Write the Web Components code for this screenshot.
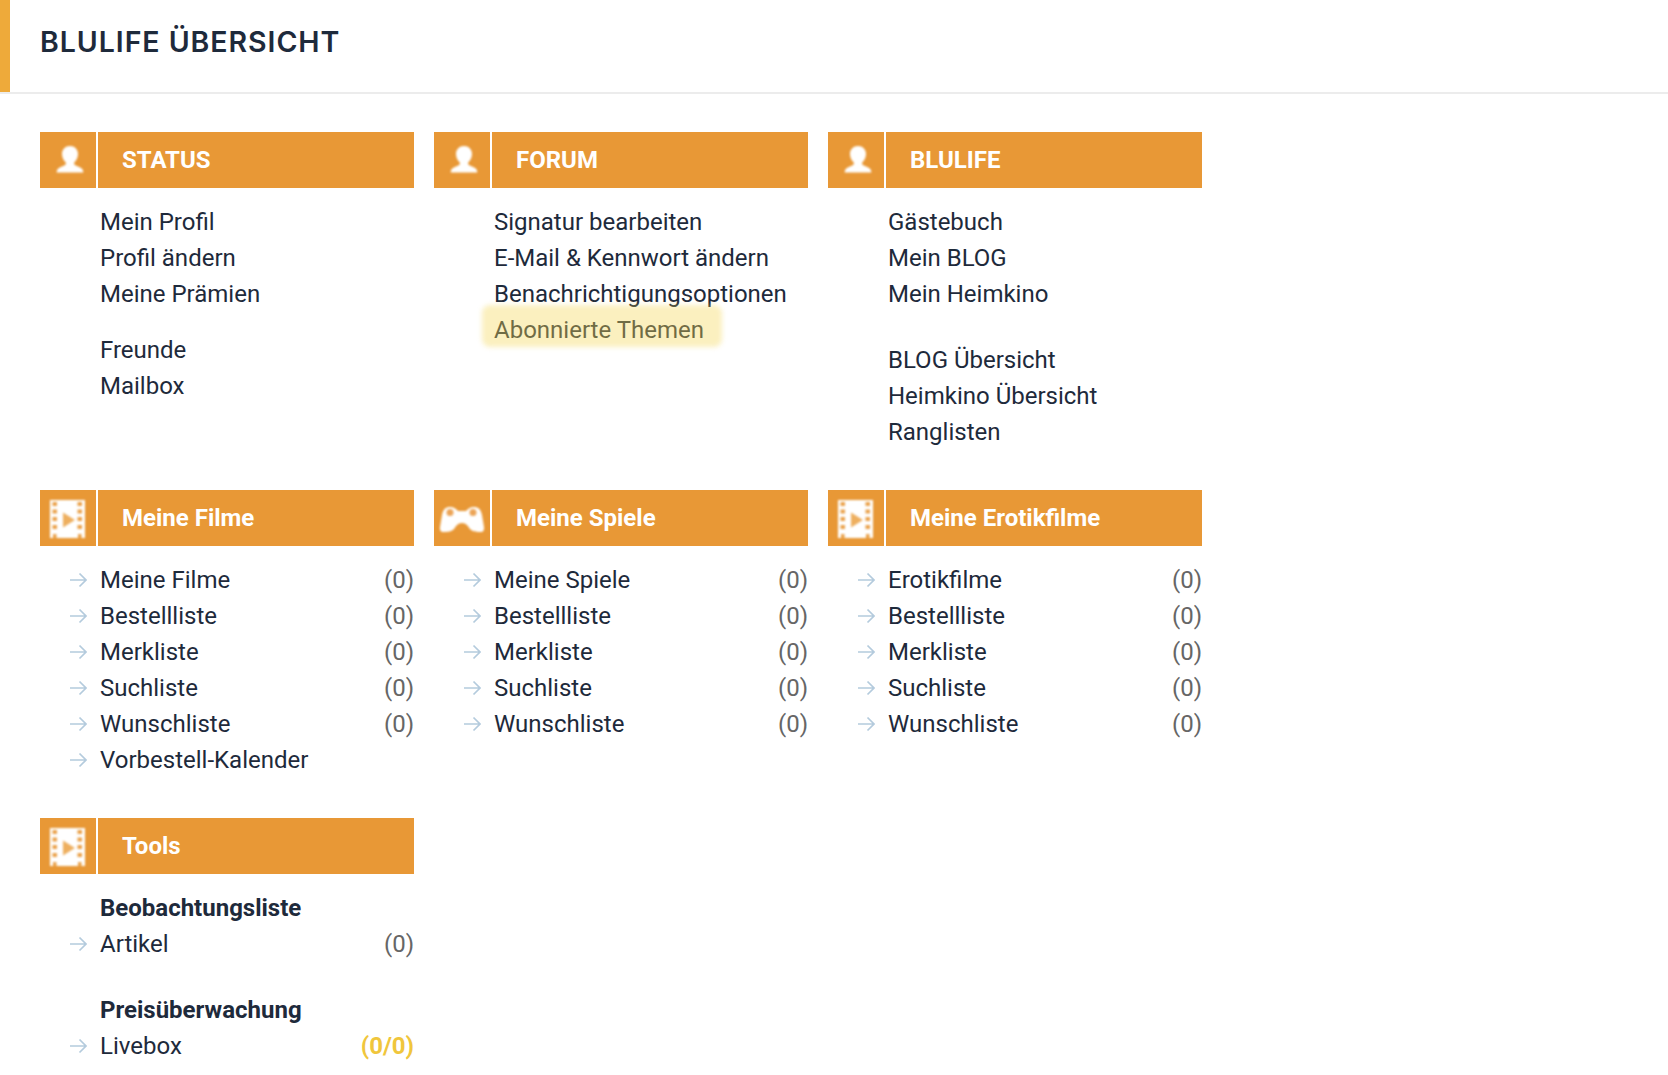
<!DOCTYPE html>
<html lang="de">
<head>
<meta charset="UTF-8">
<title>Blulife Übersicht</title>
<style>
	body {
		margin: 0;
		background: #fff;
		color: #1e2a3b;
		font-family: Roboto, "Liberation Sans", sans-serif;
	}
</style>
</head>
<body>
	<page-header>BLULIFE ÜBERSICHT</page-header>
	<section-grid>
		<section-box icon="person" heading="STATUS">
			<link-row>Mein Profil</link-row>
			<link-row>Profil ändern</link-row>
			<link-row>Meine Prämien</link-row>
			<link-row gap="20">Freunde</link-row>
			<link-row>Mailbox</link-row>
		</section-box>
		<section-box icon="person" heading="FORUM">
			<link-row>Signatur bearbeiten</link-row>
			<link-row>E-Mail &amp; Kennwort ändern</link-row>
			<link-row>Benachrichtigungsoptionen</link-row>
			<link-row marked>Abonnierte Themen</link-row>
		</section-box>
		<section-box icon="person" heading="BLULIFE">
			<link-row>Gästebuch</link-row>
			<link-row>Mein BLOG</link-row>
			<link-row>Mein Heimkino</link-row>
			<link-row gap="30">BLOG Übersicht</link-row>
			<link-row>Heimkino Übersicht</link-row>
			<link-row>Ranglisten</link-row>
		</section-box>

		<section-box icon="film" heading="Meine Filme">
			<link-row arrow count="(0)">Meine Filme</link-row>
			<link-row arrow count="(0)">Bestellliste</link-row>
			<link-row arrow count="(0)">Merkliste</link-row>
			<link-row arrow count="(0)">Suchliste</link-row>
			<link-row arrow count="(0)">Wunschliste</link-row>
			<link-row arrow>Vorbestell-Kalender</link-row>
		</section-box>
		<section-box icon="pad" heading="Meine Spiele">
			<link-row arrow count="(0)">Meine Spiele</link-row>
			<link-row arrow count="(0)">Bestellliste</link-row>
			<link-row arrow count="(0)">Merkliste</link-row>
			<link-row arrow count="(0)">Suchliste</link-row>
			<link-row arrow count="(0)">Wunschliste</link-row>
		</section-box>
		<section-box icon="film" heading="Meine Erotikfilme">
			<link-row arrow count="(0)">Erotikfilme</link-row>
			<link-row arrow count="(0)">Bestellliste</link-row>
			<link-row arrow count="(0)">Merkliste</link-row>
			<link-row arrow count="(0)">Suchliste</link-row>
			<link-row arrow count="(0)">Wunschliste</link-row>
		</section-box>

		<section-box icon="film" heading="Tools">
			<link-row strong>Beobachtungsliste</link-row>
			<link-row arrow count="(0)">Artikel</link-row>
			<link-row strong gap="30">Preisüberwachung</link-row>
			<link-row arrow count="(0/0)" hot>Livebox</link-row>
		</section-box>
	</section-grid>

	<template id="header-tpl">
		<style>
			:host {
				display: flex;
				height: 92px;
				border-bottom: 2px solid #ececec;
				font: 600 28.500px Inter, "Liberation Sans", sans-serif;
				letter-spacing: .950px;
				color: #1e2a3b;
			}
			.accent {
				width: 10px;
				flex: none;
				background: #eeaa3a;
			}
			.text {
				padding: 25px 0 0 30px;
				line-height: 34px;
			}
		</style>
		<div class="accent"></div>
		<div class="text"><slot></slot></div>
	</template>

	<template id="grid-tpl">
		<style>
			:host {
				display: grid;
				grid-template-columns: repeat(3, 374px);
				column-gap: 20px;
				row-gap: 40px;
				align-items: start;
				padding: 38px 0 0 40px;
			}
		</style>
		<slot></slot>
	</template>

	<template id="box-tpl">
		<style>
			:host { display: block; }
			.head {
				display: flex;
				gap: 2px;
				height: 56px;
				color: #fff;
			}
			.icon, .title { background: #e89836; }
			.icon { width: 56px; flex: none; }
			.icon svg { display: block; filter: blur(.8px); }
			.title {
				flex: 1;
				padding-left: 24px;
				font: 700 24px/56px Roboto, sans-serif;
			}
			.body { padding-top: 16px; }
		</style>
		<div class="head">
			<div class="icon"></div>
			<div class="title"></div>
		</div>
		<div class="body"><slot></slot></div>
	</template>

	<template id="row-tpl">
		<style>
			:host {
				display: flex;
				align-items: center;
				position: relative;
				height: 36px;
				padding-left: 60px;
				font: 400 24px/36px Roboto, sans-serif;
				color: #1e2a3b;
			}
			:host([strong]) { font-weight: 700; }
			.arrow {
				position: absolute;
				left: 30px;
				top: 10px;
			}
			.label { flex: 1; }
			.count { color: #666; }
			:host([hot]) .count { color: #f0c63c; font-weight: 700; }
			.mark {
				position: absolute;
				left: 48px;
				top: -7px;
				width: 240px;
				height: 42px;
				background: rgba(244, 215, 87, .38);
				border-radius: 8px;
				filter: blur(2.500px);
			}
		</style>
		<span class="label"><slot></slot></span>
	</template>

	<script>
		const ICONS = {
			person: `<svg width="56" height="56" viewBox="0 0 56 56" fill="#fff">
				<path d="M30 14c4.600 0 8 3.400 8 8 0 3.400-1.600 6.400-3.600 8.200-.6 1-.4 2.200.8 3 2 1.200 6 2 7.400 4.200.5.900.7 1.700.7 3.100H16.700c0-1.400.2-2.200.7-3.100 1.400-2.200 5.400-3 7.400-4.200 1.200-.8 1.400-2 .8-3-2-1.800-3.600-4.800-3.600-8.200 0-4.600 3.400-8 8-8z"/>
			</svg>`,
			film: `<svg width="56" height="56" viewBox="0 0 56 56">
				<path fill="#fff" d="M10 10h35v38H10z"/>
				<g fill="#eaa14a">
					<rect x="12.500" y="12" width="4.500" height="4"/><rect x="12.500" y="19.500" width="4.500" height="4"/>
					<rect x="12.500" y="27" width="4.500" height="4"/><rect x="12.500" y="35" width="4.500" height="4"/>
					<rect x="37.500" y="12" width="4.500" height="4"/><rect x="37.500" y="19.500" width="4.500" height="4"/>
					<rect x="37.500" y="27" width="4.500" height="4"/><rect x="37.500" y="35" width="4.500" height="4"/>
					<rect x="13" y="44" width="3.500" height="4"/><rect x="38" y="44" width="3.500" height="4"/>
					<path d="M23 22.500l12 7.500-12 7.500z" fill="#eeaf5f"/>
				</g>
			</svg>`,
			pad: `<svg width="56" height="56" viewBox="0 0 56 56">
				<path fill="#fff" d="M16 17c4 0 6 2 8 4h8c2-2 4-4 8-4 5 0 7 3 8 8l2 12c.5 3-1 5-3 5-4 0-8 0-11-3-2-3-4-6-8-6s-6 3-8 6c-3 3-7 3-11 3-2 0-3.500-2-3-5l2-12c1-5 3-8 8-8z"/>
				<circle cx="16" cy="22.500" r="3.500" fill="#eca456"/>
				<circle cx="39" cy="22.500" r="3.500" fill="#eca456"/>
			</svg>`
		};

		const ARROW = `<svg class="arrow" width="17" height="16" viewBox="0 0 17 16" fill="none" stroke="#b4cbdd" stroke-width="1.700">
			<path d="M0 8h16M9.500 1.500L16 8l-6.500 6.500"/>
		</svg>`;

		class TplElement extends HTMLElement {
			constructor(tplId) {
				super();
				const content = document.getElementById(tplId).content.cloneNode(true);
				this.attachShadow({ mode: 'open' }).appendChild(content);
			}
		}

		class PageHeader extends TplElement {
			constructor() { super('header-tpl'); }
		}

		class SectionGrid extends TplElement {
			constructor() { super('grid-tpl'); }
		}

		class SectionBox extends TplElement {
			constructor() { super('box-tpl'); }
			connectedCallback() {
				this.shadowRoot.querySelector('.icon').innerHTML = ICONS[this.getAttribute('icon')];
				this.shadowRoot.querySelector('.title').textContent = this.getAttribute('heading');
			}
		}

		class LinkRow extends TplElement {
			constructor() { super('row-tpl'); }
			connectedCallback() {
				const root = this.shadowRoot;
				if (this.hasAttribute('gap')) this.style.marginTop = this.getAttribute('gap') + 'px';
				if (this.hasAttribute('arrow')) root.querySelector('.label').insertAdjacentHTML('beforebegin', ARROW);
				if (this.hasAttribute('count')) {
					const count = document.createElement('span');
					count.className = 'count';
					count.textContent = this.getAttribute('count');
					root.appendChild(count);
				}
				if (this.hasAttribute('marked')) {
					const mark = document.createElement('div');
					mark.className = 'mark';
					root.appendChild(mark);
				}
			}
		}

		customElements.define('page-header', PageHeader);
		customElements.define('section-grid', SectionGrid);
		customElements.define('section-box', SectionBox);
		customElements.define('link-row', LinkRow);
	</script>
</body>
</html>
